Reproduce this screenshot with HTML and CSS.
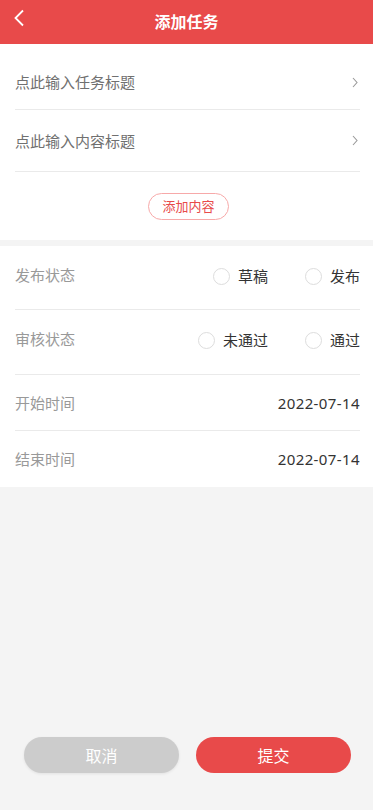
FILE: index.html
```html
<!DOCTYPE html>
<html lang="zh-CN">
<head>
    <meta charset="UTF-8">
    <meta name="viewport" content="width=device-width, initial-scale=1.0">
    <title>添加任务</title>
    <link rel="stylesheet" href="styles.css">
</head>
<body>
    <div class="page">
        <div class="nav">
            <span class="nav-back">
                <svg width="12" height="18" viewBox="0 0 12 18"><path d="M10 1.5 L2.5 9 L10 16.5" fill="none" stroke="#fff" stroke-width="1.8"/></svg>
            </span>
            <h1 class="nav-title">添加任务</h1>
        </div>

        <!-- Titles -->
        <div class="card card-top">
            <div class="link-row first">
                <span class="link-text">点此输入任务标题</span>
                <svg class="arrow" width="6" height="11" viewBox="0 0 6 11"><path d="M1 1 L5 5.5 L1 10" fill="none" stroke="#999" stroke-width="1.1"/></svg>
            </div>
            <div class="link-row">
                <span class="link-text">点此输入内容标题</span>
                <svg class="arrow" width="6" height="11" viewBox="0 0 6 11"><path d="M1 1 L5 5.5 L1 10" fill="none" stroke="#999" stroke-width="1.1"/></svg>
            </div>
            <div class="add-wrap">
                <button class="add-btn">添加内容</button>
            </div>
        </div>

        <!-- Status and dates -->
        <div class="card card-form">
            <div class="field field-status">
                <span class="field-label">发布状态</span>
                <div class="radios">
                    <label class="radio"><span class="dot"></span>草稿</label>
                    <label class="radio"><span class="dot"></span>发布</label>
                </div>
            </div>
            <div class="field field-status second">
                <span class="field-label">审核状态</span>
                <div class="radios">
                    <label class="radio"><span class="dot"></span>未通过</label>
                    <label class="radio"><span class="dot"></span>通过</label>
                </div>
            </div>
            <div class="field field-date">
                <span class="field-label">开始时间</span>
                <span class="date">2022-07-14</span>
            </div>
            <div class="field field-date last">
                <span class="field-label">结束时间</span>
                <span class="date">2022-07-14</span>
            </div>
        </div>

        <div class="footer">
            <button class="btn btn-cancel">取消</button>
            <button class="btn btn-submit">提交</button>
        </div>
    </div>
</body>
</html>
```

FILE: styles.css
```css
* {
    box-sizing: border-box;
}
body {
    margin: 0;
    padding: 0;
    background-color: #f4f4f4;
    font-family: "Noto Sans", "Noto Sans CJK SC", sans-serif;
}
.page {
    min-height: 810px;
    display: flex;
    flex-direction: column;
}
.nav {
    position: relative;
    height: 44px;
    background-color: #e84a4a;
    display: flex;
    justify-content: center;
    align-items: center;
}
.nav-back {
    position: absolute;
    left: 13px;
    top: 9px;
    display: flex;
}
.nav-title {
    margin: 0;
    font-size: 16px;
    font-weight: bold;
    color: #fff;
    line-height: 20px;
    padding-bottom: 1px;
}
.card {
    background-color: #fff;
    padding: 0 13px 0 15px;
}
.card-top {
    margin-bottom: 6px;
}
.link-row {
    height: 62px;
    display: flex;
    align-items: center;
    justify-content: space-between;
    border-bottom: 1px solid #eaeaea;
    padding-right: 2px;
}
.link-row.first {
    height: 66px;
    align-items: flex-start;
}
.link-row.first .link-text {
    margin-top: 28px;
}
.link-row.first .arrow {
    margin-top: 33px;
}
.link-text {
    font-size: 15px;
    color: #707070;
    line-height: 20px;
}
.add-wrap {
    height: 68px;
    display: flex;
    justify-content: center;
    align-items: center;
}
.add-btn {
    height: 27px;
    padding: 0 13px;
    border: 1px solid #f7a9a9;
    border-radius: 14px;
    background: #fff;
    color: #e84a4a;
    font-family: inherit;
    font-size: 13px;
    line-height: 25px;
    margin-left: 2px;
}
.field {
    display: flex;
    justify-content: space-between;
    border-bottom: 1px solid #eaeaea;
}
.field.last {
    border-bottom: none;
}
.field-label {
    font-size: 15px;
    color: #999;
    line-height: 18px;
}
.field-status {
    align-items: flex-start;
    height: 64px;
    padding-top: 20px;
}
.field-status.second {
    height: 65px;
}
.field-date {
    height: 56px;
    align-items: center;
}
.radios {
    display: flex;
    margin-top: 1px;
    gap: 37px;
}
.radio {
    display: flex;
    align-items: center;
    font-size: 15px;
    color: #333;
    line-height: 18px;
}
.dot {
    width: 17px;
    height: 17px;
    border: 1px solid #ddd;
    border-radius: 50%;
    margin-right: 8px;
}
.date {
    font-size: 15px;
    color: #333;
    letter-spacing: 0.4px;
}
.footer {
    margin-top: auto;
    display: flex;
    gap: 17px;
    padding: 0 22px 37px 24px;
}
.btn {
    width: 155px;
    height: 36px;
    border: none;
    border-radius: 18px;
    color: #fff;
    font-family: inherit;
    font-size: 16px;
}
.btn-cancel {
    background-color: #cccccc;
    box-shadow: 0 1px 3px rgba(0, 0, 0, 0.08);
}
.btn-submit {
    background-color: #e84a4a;
}
```
